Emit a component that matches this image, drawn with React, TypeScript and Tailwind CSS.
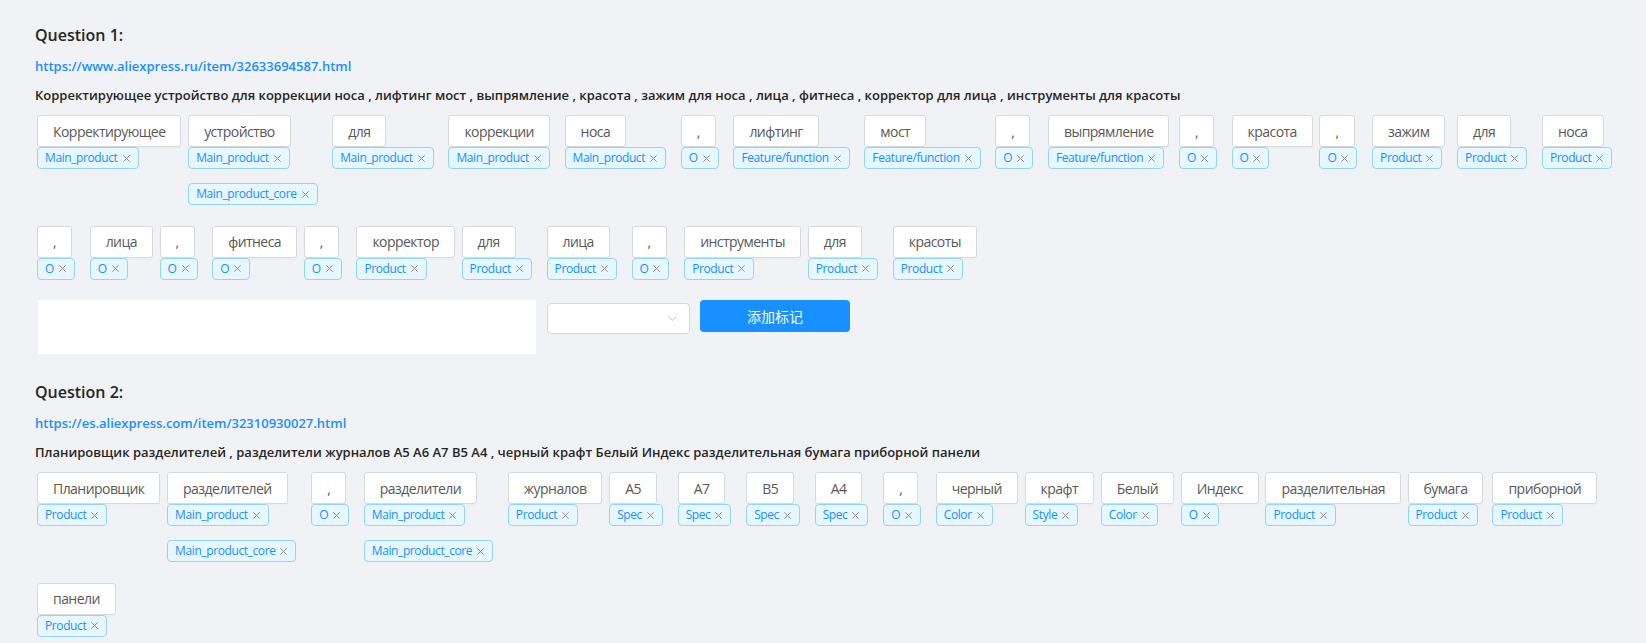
import { ChevronDown } from "lucide-react";

type Token = {
  word: string;
  tags: string[];
};

type Question = {
  title: string;
  url: string;
  sentence: string;
  tokens: Token[];
};

const questions: Question[] = [
  {
    title: "Question 1:",
    url: "https://www.aliexpress.ru/item/32633694587.html",
    sentence:
      "Корректирующее устройство для коррекции носа , лифтинг мост , выпрямление , красота , зажим для носа , лица , фитнеса , корректор для лица , инструменты для красоты",
    tokens: [
      { word: "Корректирующее", tags: ["Main_product"] },
      { word: "устройство", tags: ["Main_product", "Main_product_core"] },
      { word: "для", tags: ["Main_product"] },
      { word: "коррекции", tags: ["Main_product"] },
      { word: "носа", tags: ["Main_product"] },
      { word: ",", tags: ["O"] },
      { word: "лифтинг", tags: ["Feature/function"] },
      { word: "мост", tags: ["Feature/function"] },
      { word: ",", tags: ["O"] },
      { word: "выпрямление", tags: ["Feature/function"] },
      { word: ",", tags: ["O"] },
      { word: "красота", tags: ["O"] },
      { word: ",", tags: ["O"] },
      { word: "зажим", tags: ["Product"] },
      { word: "для", tags: ["Product"] },
      { word: "носа", tags: ["Product"] },
      { word: ",", tags: ["O"] },
      { word: "лица", tags: ["O"] },
      { word: ",", tags: ["O"] },
      { word: "фитнеса", tags: ["O"] },
      { word: ",", tags: ["O"] },
      { word: "корректор", tags: ["Product"] },
      { word: "для", tags: ["Product"] },
      { word: "лица", tags: ["Product"] },
      { word: ",", tags: ["O"] },
      { word: "инструменты", tags: ["Product"] },
      { word: "для", tags: ["Product"] },
      { word: "красоты", tags: ["Product"] },
    ],
  },
  {
    title: "Question 2:",
    url: "https://es.aliexpress.com/item/32310930027.html",
    sentence:
      "Планировщик разделителей , разделители журналов A5 A6 A7 B5 A4 , черный крафт Белый Индекс разделительная бумага приборной панели",
    tokens: [
      { word: "Планировщик", tags: ["Product"] },
      { word: "разделителей", tags: ["Main_product", "Main_product_core"] },
      { word: ",", tags: ["O"] },
      { word: "разделители", tags: ["Main_product", "Main_product_core"] },
      { word: "журналов", tags: ["Product"] },
      { word: "A5", tags: ["Spec"] },
      { word: "A7", tags: ["Spec"] },
      { word: "B5", tags: ["Spec"] },
      { word: "A4", tags: ["Spec"] },
      { word: ",", tags: ["O"] },
      { word: "черный", tags: ["Color"] },
      { word: "крафт", tags: ["Style"] },
      { word: "Белый", tags: ["Color"] },
      { word: "Индекс", tags: ["O"] },
      { word: "разделительная", tags: ["Product"] },
      { word: "бумага", tags: ["Product"] },
      { word: "приборной", tags: ["Product"] },
      { word: "панели", tags: ["Product"] },
    ],
  },
];

function LabelTag({ label }: { label: string }) {
  return (
    <span className="mr-2 mb-[14px] inline-flex h-[22px] items-center rounded-[4px] border border-[#91d5ff] bg-[#e6f7ff] px-[7px] text-[12px] leading-5 tracking-[-0.4px] text-[#1890ff]">
      {label}
      <svg className="ml-[4px] h-[9px] w-[9px]" viewBox="0 0 10 10" fill="none">
        <path d="M1.5 1.5l7 7M8.5 1.5l-7 7" stroke="#8c8c8c" strokeWidth="1.1" />
      </svg>
    </span>
  );
}

function TokenColumn({ token }: { token: Token }) {
  return (
    <div className="flex flex-col items-start">
      <div className="flex h-8 items-center rounded-[3px] border border-[#d9d9d9] bg-white px-[15px] text-[14px] tracking-[-0.55px] text-[#595959] shadow-[0_2px_0_rgba(0,0,0,0.015)]">
        {token.word}
      </div>
      {token.tags.map((tag) => (
        <LabelTag key={tag} label={tag} />
      ))}
    </div>
  );
}

function QuestionBlock({ question }: { question: Question }) {
  return (
    <section>
      <h3 className="text-[16px] leading-6 font-semibold text-[#262626]">{question.title}</h3>
      <a className="mt-2 block text-[13px] leading-[22px] font-semibold text-[#1890ff]" href="#">
        {question.url}
      </a>
      <p className="mt-[7px] text-[13px] leading-[22px] font-semibold text-[#262626]">
        {question.sentence}
      </p>

      <div className="mt-[9px] flex flex-wrap items-start gap-x-[6.7px] gap-y-[6.5px] pl-[2px]">
        {question.tokens.map((token, i) => (
          <TokenColumn key={i} token={token} />
        ))}
      </div>

      <div className="mt-[6.5px] flex items-start pl-[3px]">
        <div className="h-[54px] w-[498px] bg-white" />
        <button
          className="mt-[3px] ml-[11px] flex h-[31px] w-[143px] items-center justify-end rounded-[4px] border border-[#d9d9d9] bg-white pr-[9px]"
          type="button"
        >
          <ChevronDown className="h-[15px] w-[15px] text-[#bfbfbf]" strokeWidth={1.5} />
        </button>
        <button
          className="ml-[10px] flex h-8 w-[150px] items-center justify-center rounded-[4px] bg-[#1890ff] text-[14px] text-white"
          style={{ fontFamily: '"Noto Sans CJK SC", sans-serif' }}
          type="button"
        >
          添加标记
        </button>
      </div>
    </section>
  );
}

export default function App() {
  return (
    <div
      className="min-h-screen bg-[#f0f2f5] pt-[23px] pl-[35px]"
      style={{ fontFamily: '"Open Sans", "Noto Sans CJK SC", sans-serif' }}
    >
      <div className="flex flex-col gap-[26px]">
        {questions.map((q) => (
          <QuestionBlock key={q.title} question={q} />
        ))}
      </div>
    </div>
  );
}
